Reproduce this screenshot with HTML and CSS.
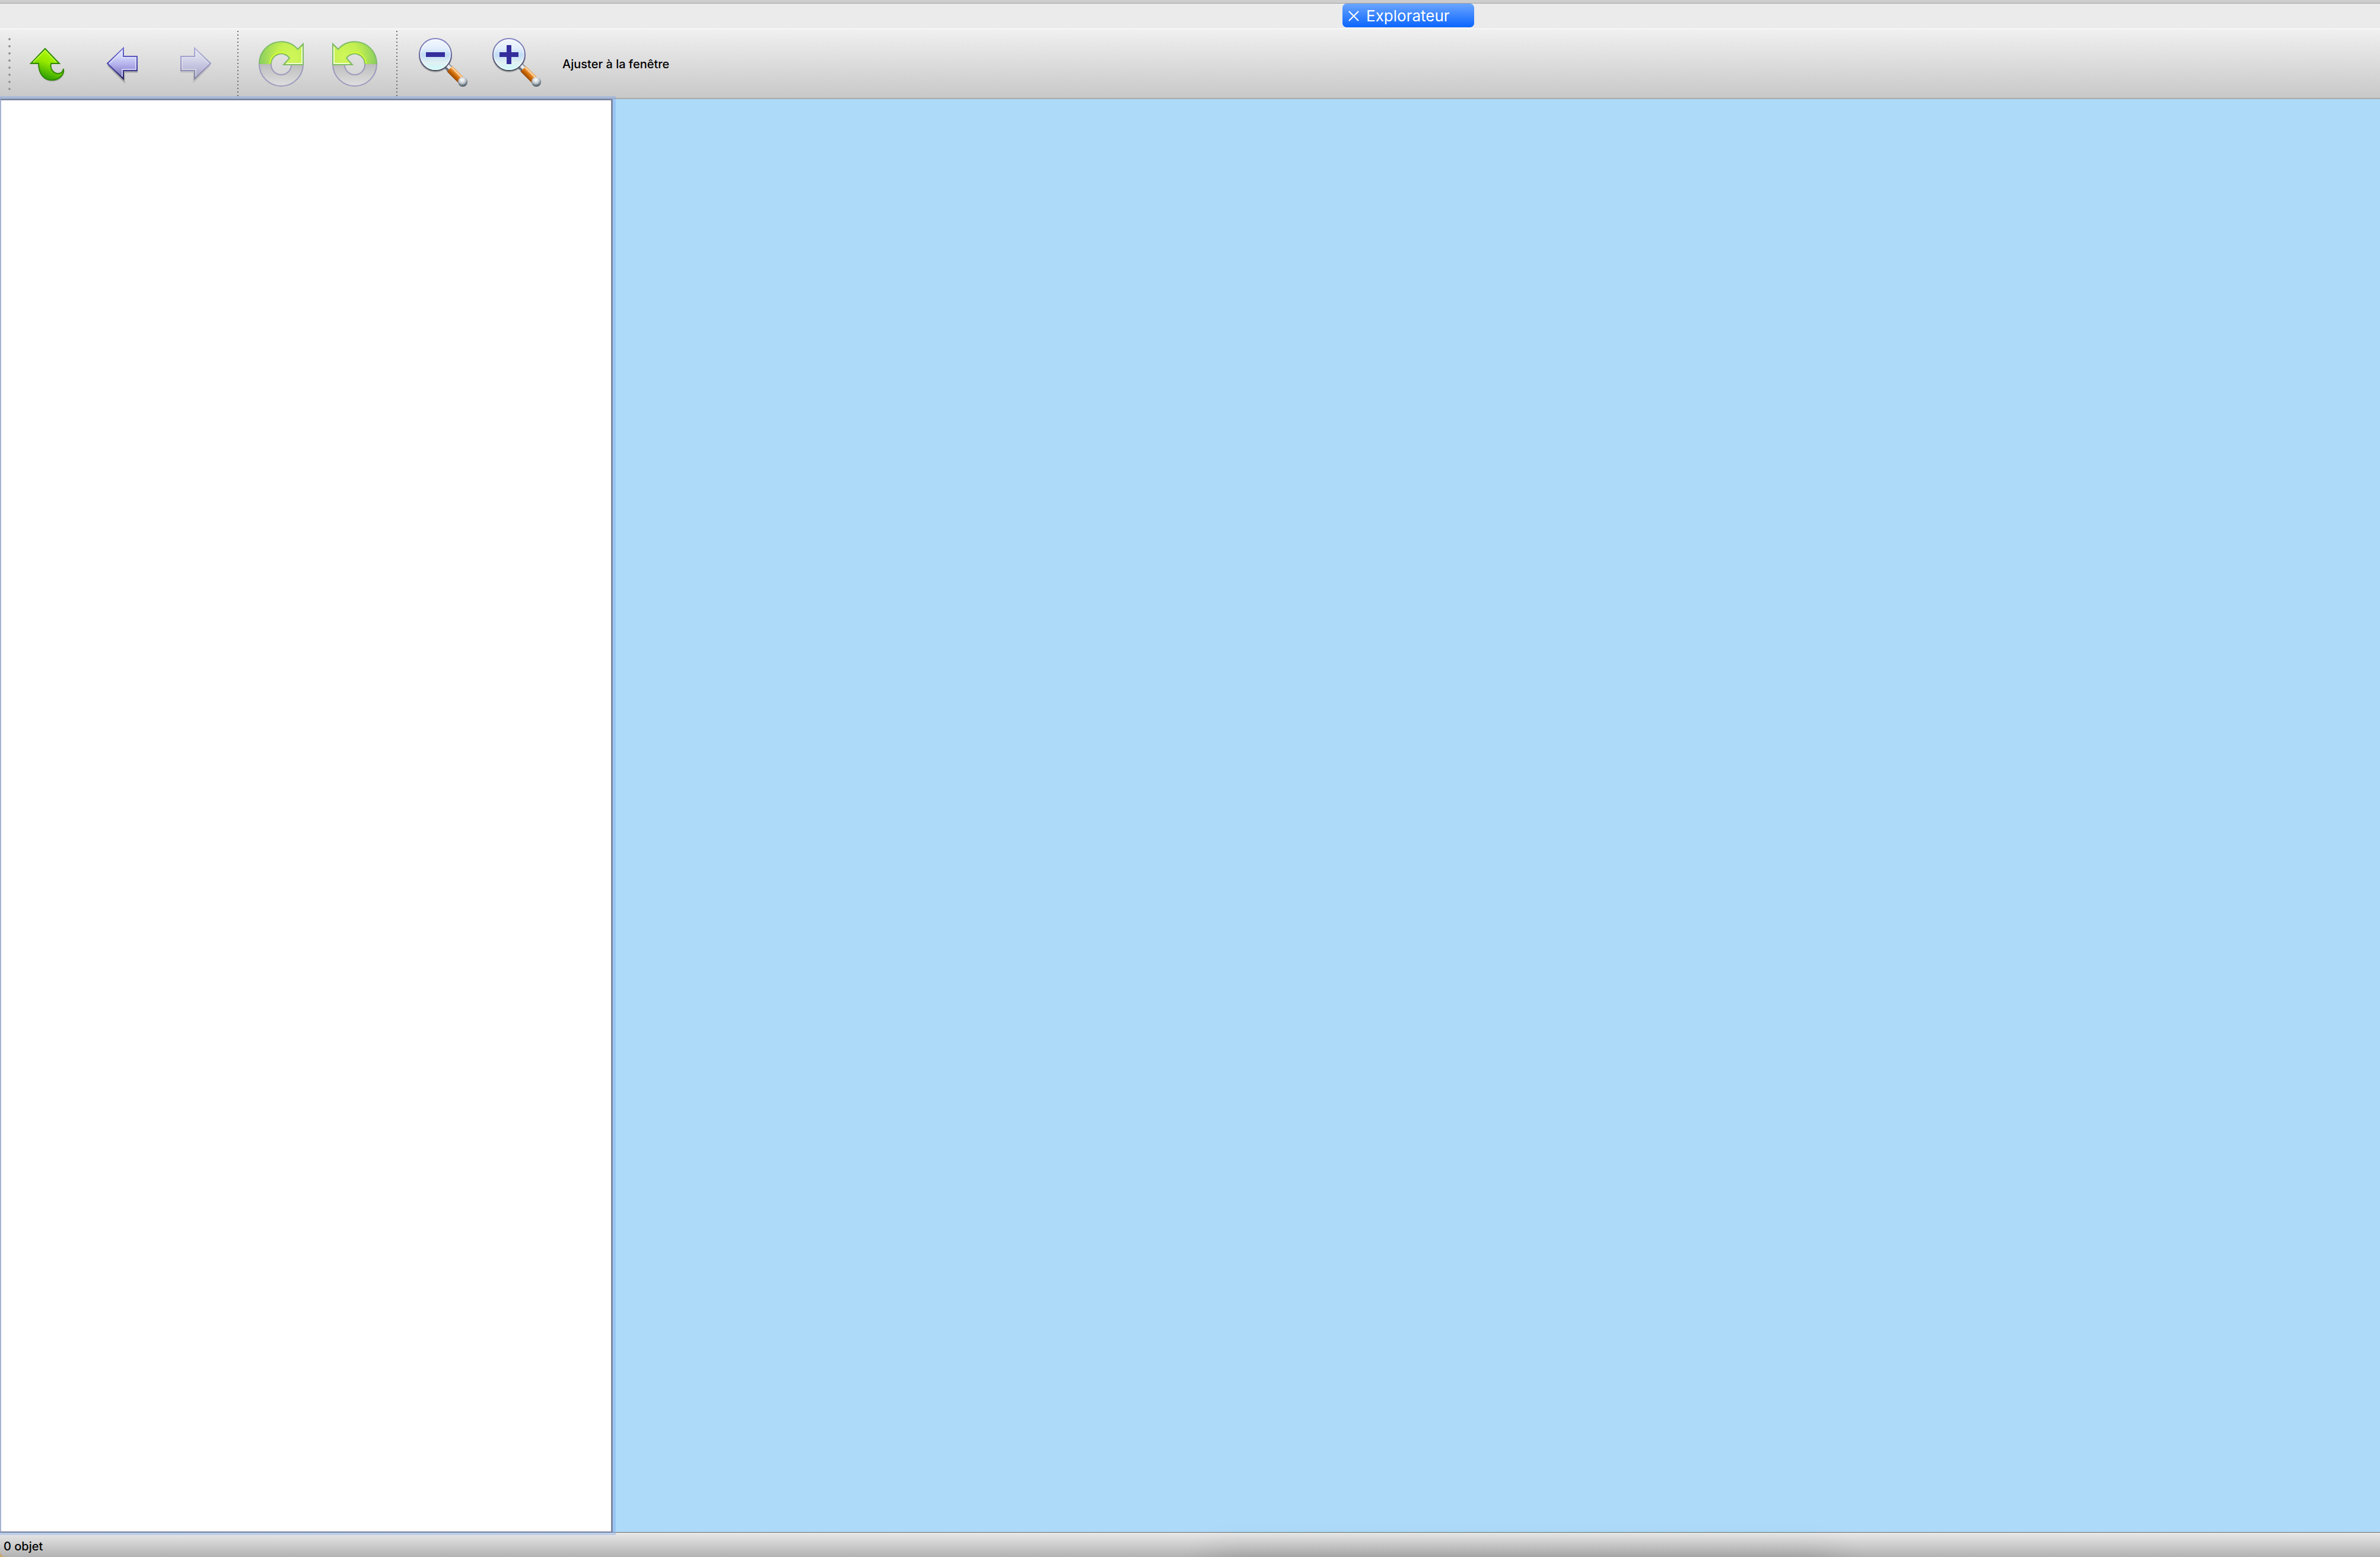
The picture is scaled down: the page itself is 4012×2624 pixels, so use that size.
FILE: index.html
```html
<!DOCTYPE html>
<html lang="fr">
<head>
<meta charset="utf-8">
<title>Explorateur</title>
<link rel="stylesheet" href="styles.css">
</head>
<body>
<svg class="defs" aria-hidden="true">
  <defs>
    <linearGradient id="green" x1="0.7" y1="0" x2="0.3" y2="1"><stop offset="0" stop-color="#b4ff00"/><stop offset="0.45" stop-color="#94e800"/><stop offset="1" stop-color="#169000"/></linearGradient>
    <linearGradient id="violet" x1="0" y1="0" x2="0" y2="1"><stop offset="0" stop-color="#e2f2ff"/><stop offset="0.3" stop-color="#d0d4fa"/><stop offset="0.6" stop-color="#aaa6e6"/><stop offset="1" stop-color="#6868a8"/></linearGradient>
    <linearGradient id="violetEdge" x1="0" y1="0" x2="0" y2="1"><stop offset="0" stop-color="#6a68ce"/><stop offset="0.6" stop-color="#4340a4"/><stop offset="1" stop-color="#25235e"/></linearGradient>
    <radialGradient id="lime" gradientUnits="userSpaceOnUse" cx="66" cy="36" r="58"><stop offset="0" stop-color="#d0f75a"/><stop offset="0.45" stop-color="#c3f050"/><stop offset="1" stop-color="#84c962"/></radialGradient>
    <linearGradient id="ring" x1="0" y1="0" x2="0" y2="1"><stop offset="0" stop-color="#bdbdbd"/><stop offset="1" stop-color="#dfdfdf"/></linearGradient>
    <linearGradient id="lens" x1="0" y1="0" x2="0" y2="1"><stop offset="0" stop-color="#f4f8ff"/><stop offset="0.3" stop-color="#e2eefc"/><stop offset="0.52" stop-color="#c0dcf5"/><stop offset="0.75" stop-color="#e2f1f3"/><stop offset="1" stop-color="#c8fafa"/></linearGradient>
    <linearGradient id="lensEdge" x1="0" y1="0" x2="0" y2="1"><stop offset="0" stop-color="#8584c4"/><stop offset="0.55" stop-color="#68679a"/><stop offset="1" stop-color="#444a58"/></linearGradient>
    <linearGradient id="handle" gradientUnits="userSpaceOnUse" x1="68" y1="70" x2="80" y2="58"><stop offset="0" stop-color="#8a4100"/><stop offset="0.3" stop-color="#c96600"/><stop offset="0.5" stop-color="#e08020"/><stop offset="0.68" stop-color="#ffe0b4"/><stop offset="0.82" stop-color="#e07a18"/><stop offset="1" stop-color="#964400"/></linearGradient>
    <radialGradient id="cap" cx="0.45" cy="0.3" r="0.7"><stop offset="0" stop-color="#ffffff"/><stop offset="0.5" stop-color="#c4cad0"/><stop offset="1" stop-color="#344450"/></radialGradient>
    <symbol id="left" viewBox="0 0 96 96">
      <path d="M24 50 51 77V61H74" fill="none" stroke="#000" stroke-opacity=".22" stroke-width="3"/>
      <path d="M23 47 50 21V35H73V59H50V73Z" fill="url(#violet)" stroke="url(#violetEdge)" stroke-width="2"/>
      <path d="M26 47 48 25V37H71V57H48V69" fill="none" stroke="#e4e4ff" stroke-opacity=".7" stroke-width="2"/>
    </symbol>
    <symbol id="rotate" viewBox="0 0 96 96">
      <path d="M11 48A37 37 0 0 0 85 48H66A17 17 0 0 1 31 48Z" fill="url(#ring)"/>
      <path d="M11 48A37 37 0 0 0 85 48" fill="none" stroke="#9c9abd" stroke-width="2"/>
      <path d="M31 48A17 17 0 0 0 65 50" fill="none" stroke="#9c9abd" stroke-width="2"/>
      <path d="M11 48A37 37 0 0 1 76 23L85 14V49H52L62 38A17 17 0 0 0 31 48Z" fill="url(#lime)"/>
      <path d="M11 48A37 37 0 0 1 76 23L85 14V49H52L62 38A17 17 0 0 0 31 48" fill="none" stroke="#80bb68" stroke-width="2"/>
      <path d="M83 19V47H57" fill="none" stroke="#f2ffd0" stroke-width="2"/>
      <path d="M29 47A19 19 0 0 1 55 30" fill="none" stroke="#d8ff30" stroke-width="2"/>
    </symbol>
    <symbol id="glass" viewBox="0 0 96 96">
      <circle cx="40" cy="34" r="28" fill="#000" fill-opacity=".22"/>
      <path d="M59 51 66 58" stroke="#69727c" stroke-width="11"/>
      <path d="M60 50 67 57" stroke="#e6e8ea" stroke-width="6"/>
      <path d="M64 56 83 75" stroke="url(#handle)" stroke-width="13"/>
      <circle cx="86" cy="78" r="8" fill="url(#cap)"/>
      <circle cx="40" cy="32" r="27" fill="url(#lens)" stroke="url(#lensEdge)" stroke-width="2"/>
      <circle cx="40" cy="32" r="25" fill="none" stroke="#fff" stroke-opacity=".4" stroke-width="2"/>
    </symbol>
  </defs>
</svg>
<div class="window">
  <div class="titlebar-edge"></div>
  <nav class="tabs">
    <button class="tab" type="button">
      <svg class="tab-close" viewBox="0 0 18 18" aria-hidden="true"><path d="M1 1 17 17M17 1 1 17" stroke="#fff" stroke-width="2"/></svg>
      <span>Explorateur</span>
    </button>
  </nav>
  <header class="toolbar">
    <div class="grip"></div>
    <button class="tool" type="button" aria-label="Dossier parent">
      <svg class="icon" viewBox="0 0 96 96">
        <path d="M32 50C32 66 42 76 54 76 65 76 72 69 73 60" fill="none" stroke="#000" stroke-opacity=".18" stroke-width="3"/>
        <path d="M42 22 66 47H52C50 56 56 64 64 64 70 64 72 61 73 56 75 67 64 75 53 75 40 75 31 64 31 47H18Z" fill="url(#green)" stroke="#318a00" stroke-width="2"/>
        <path d="M22 45 42 25 61 45" fill="none" stroke="#c4ff50" stroke-opacity=".7" stroke-width="2"/>
      </svg>
    </button>
    <button class="tool" type="button" aria-label="Précédent"><svg class="icon"><use href="#left"/></svg></button>
    <button class="tool" type="button" aria-label="Suivant" disabled><svg class="icon flipped faded"><use href="#left"/></svg></button>
    <div class="separator"></div>
    <button class="tool" type="button" aria-label="Rotation à droite" disabled><svg class="icon"><use href="#rotate"/></svg></button>
    <button class="tool" type="button" aria-label="Rotation à gauche" disabled><svg class="icon flipped"><use href="#rotate"/></svg></button>
    <div class="separator"></div>
    <button class="tool" type="button" aria-label="Zoom arrière"><svg class="icon" viewBox="0 0 96 96"><use href="#glass"/><path d="M24 28H56V36H24Z" fill="#342d9c"/></svg></button>
    <button class="tool" type="button" aria-label="Zoom avant"><svg class="icon" viewBox="0 0 96 96"><use href="#glass"/><path d="M24 28H36V16H44V28H56V36H44V48H36V36H24Z" fill="#342d9c"/></svg></button>
    <button class="fit" type="button">Ajuster à la fenêtre</button>
  </header>
  <main class="content">
    <aside class="sidebar" aria-label="Dossiers"></aside>
    <section class="viewer" aria-label="Aperçu"></section>
  </main>
  <footer class="status">0 objet</footer>
  <div class="dock-shadow"></div>
</div>
</body>
</html>
```
FILE: styles.css
```css
* {
  box-sizing: border-box;
}

body {
  margin: 0;
  background: #c9a86e;
  font-family: Inter, "Liberation Sans", sans-serif;
  color: #000;
}

button {
  margin: 0;
  padding: 0;
  border: 0;
  background: none;
  font: inherit;
  color: inherit;
}

.defs {
  position: absolute;
  width: 0;
  height: 0;
}

.window {
  position: relative;
  display: flex;
  flex-direction: column;
  min-height: 100vh;
  overflow: hidden;
}

.titlebar-edge {
  height: 6px;
  background: #cdcdcd;
  border-bottom: 1px solid #a0a0a0;
}

.tabs {
  display: flex;
  justify-content: center;
  height: 42px;
  padding-left: 736px;
  background: #ebebeb;
}

.tab {
  display: flex;
  align-items: center;
  gap: 12px;
  width: 222px;
  height: 40px;
  padding: 2px 0 0 10px;
  border-radius: 7px;
  background: linear-gradient(#6ba5ff, #0a65ff);
  color: #fff;
  font-size: 26px;
  line-height: 38px;
}

.tab-close {
  width: 18px;
  height: 18px;
}

.toolbar {
  display: flex;
  align-items: center;
  height: 119px;
  padding: 2px 0 0 14px;
  border-top: 1px solid #fff;
  border-bottom: 2px solid #a9a9a9;
  background: linear-gradient(#f0f0f0, #c8c8c8);
}

.grip {
  width: 6px;
  height: 96px;
  background: radial-gradient(circle at 2px 6px, #979797 2px, transparent 2px) 0 0 / 6px 12px;
}

.tool {
  width: 124px;
  height: 96px;
}

.icon {
  display: block;
  width: 96px;
  height: 96px;
  margin: 0 auto;
}

.flipped {
  transform: scaleX(-1);
}

.faded {
  opacity: 0.45;
}

.separator {
  align-self: stretch;
  width: 20px;
  margin-top: 1px;
  background: repeating-linear-gradient(#6c6c6c 0 2px, transparent 2px 6px) 8px 0 / 2px 100% no-repeat;
}

.fit {
  margin-left: 20px;
  font-size: 20px;
  font-weight: 500;
  line-height: 32px;
}

.content {
  display: flex;
  flex: 1;
}

.sidebar {
  position: relative;
  width: 1033px;
  border: 1px solid #737d98;
  border-top-width: 2px;
  border-left: 2px solid #a5b2d0;
  border-right: 3px solid #8088a2;
  background: #fff;
  box-shadow: 0 0 0 5px rgba(125, 168, 240, 0.4);
}

.viewer {
  flex: 1;
  background: #addaf8;
}

.status {
  height: 42px;
  padding-left: 6px;
  border-top: 1px solid #6c6c6c;
  border-bottom-left-radius: 10px;
  background: linear-gradient(#e8e8e8, #b2b2b2);
  font-size: 20px;
  font-weight: 500;
  line-height: 46px;
}

/* Shadow cast on the window by the dock below it */
.dock-shadow {
  position: absolute;
  top: 100%;
  left: 51%;
  width: 26%;
  height: 80px;
  box-shadow: 0 0 60px rgba(0, 0, 0, 0.15);
}
```
